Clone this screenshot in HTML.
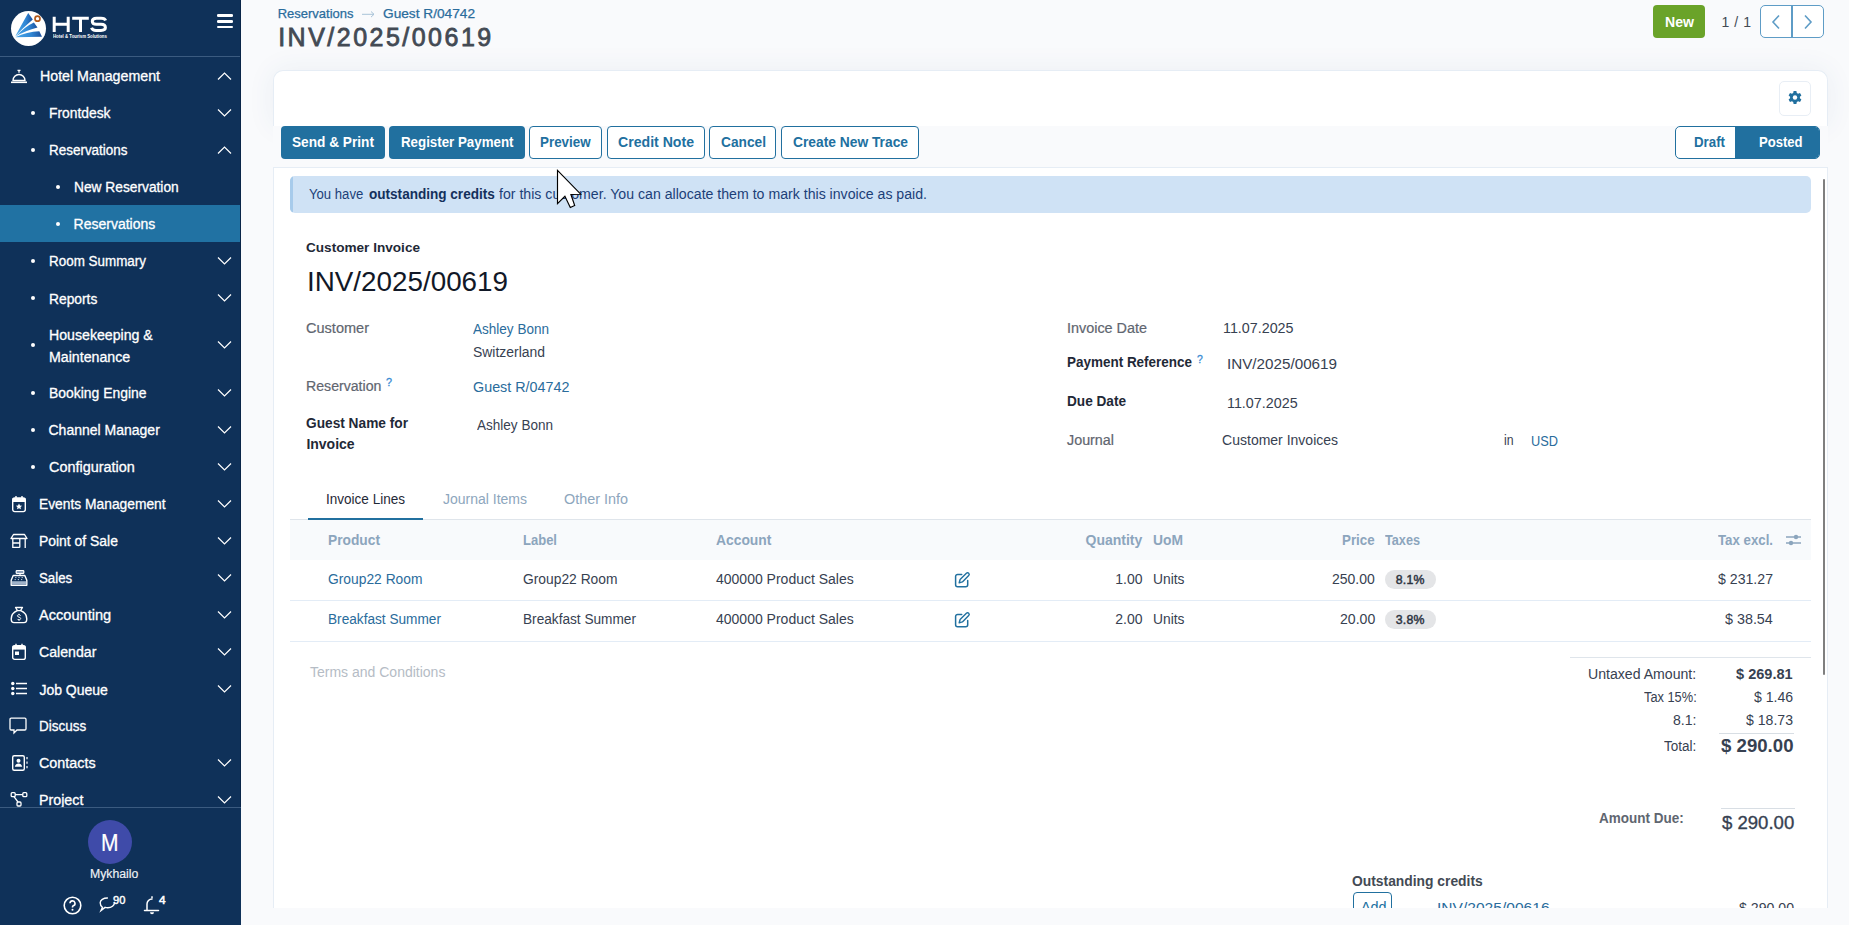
<!DOCTYPE html>
<html><head><meta charset="utf-8">
<style>
html,body{margin:0;padding:0;width:1849px;height:925px;overflow:hidden;background:#f9fafc;font-family:"Liberation Sans", sans-serif;}
.t{position:absolute;white-space:nowrap;transform-origin:0 0;}
.a{position:absolute;}
#side{position:absolute;left:0;top:0;width:241px;height:925px;background:#0f3159;overflow:hidden;}
.chev{position:absolute;left:218px;width:13px;height:8px;}
.dot{position:absolute;width:5px;height:5px;border-radius:50%;background:#fff;}
.btn{position:absolute;top:126px;height:33px;border-radius:4px;box-sizing:border-box;}
.bp{background:#21709f;}
.bo{background:#fff;border:1px solid #21709f;}
</style></head><body>
<div id="side">
  <!-- logo -->
  <div class="a" style="left:11px;top:11px;width:35px;height:35px;border-radius:50%;background:#fff;"></div>
  <svg class="a" style="left:11px;top:11px" width="35" height="35" viewBox="0 0 35 35">
    <defs><linearGradient id="lg" x1="0" x2="1" y1="0" y2="0"><stop offset="0" stop-color="#4aa8ea"/><stop offset="0.6" stop-color="#2f86d4"/><stop offset="1" stop-color="#1c4f9c"/></linearGradient></defs>
    <path d="M4.3 25.3 Q11.5 12 17.2 2 L21.8 8.4 Q12 16.5 4.3 25.3 Z" fill="url(#lg)"/>
    <path d="M4.6 25.5 Q14 15.5 22.9 11.5 L26.5 16.5 Q14.5 19.5 4.6 25.5 Z" fill="url(#lg)"/>
    <path d="M4.3 26.2 Q16 20.6 28.3 20.2 L31 25.8 Z" fill="url(#lg)"/>
    <circle cx="26.5" cy="7.7" r="2.5" fill="none" stroke="#b25a1c" stroke-width="1.7"/>
  </svg>
  <svg class="a" style="left:50px;top:14px" width="60" height="26" viewBox="50 14 60 26">
    <path d="M54.2 16.7V31.9M68.2 16.7V31.9M54.2 24.3H68.2" stroke="#fff" stroke-width="3" fill="none"/>
    <path d="M72.2 18.2H88.8M80.5 16.7V31.9" stroke="#fff" stroke-width="3" fill="none"/>
    <path d="M105.6 20.5C105 18.6 103.6 18.2 101 18.2H96.5C93.3 18.2 92.3 19.4 92.3 21.2C92.3 23 93.3 24.3 96.5 24.3H101C104.3 24.3 105.4 25.6 105.4 27.6C105.4 29.6 104.3 30.4 101 30.4H96C93.2 30.4 92.2 29.8 91.5 27.8" stroke="#fff" stroke-width="3" fill="none"/>
  </svg>
  <div class="t" style="left:52.5px;top:33.5px;font-size:4.6px;line-height:5px;font-weight:700;color:#fff;transform:scaleX(0.94)">Hotel &amp; Tourism Solutions</div>
  <!-- hamburger -->
  <div class="a" style="left:217px;top:14.1px;width:16px;height:2.6px;border-radius:1.3px;background:#fff;"></div>
  <div class="a" style="left:217px;top:20px;width:16px;height:2.6px;border-radius:1.3px;background:#fff;"></div>
  <div class="a" style="left:217px;top:25.5px;width:16px;height:2.6px;border-radius:1.3px;background:#fff;"></div>
  <div class="a" style="left:0;top:56px;width:241px;height:1px;background:#3b5b80;"></div>
  <!-- active -->
  <div class="a" style="left:0;top:205px;width:240px;height:37px;background:#2172a3;"></div>
  <div class="a" style="left:240px;top:0;width:1px;height:925px;background:#0a2548;"></div>
  <svg class="a" style="left:217px;top:71px" width="15" height="10" viewBox="0 0 15 10"><path d="M1 8.5L7.5 2 14 8.5" fill="none" stroke="#fff" stroke-width="1.2"/></svg>
<svg class="a" style="left:217px;top:145px" width="15" height="10" viewBox="0 0 15 10"><path d="M1 8.5L7.5 2 14 8.5" fill="none" stroke="#fff" stroke-width="1.2"/></svg>
<svg class="a" style="left:217px;top:108px" width="15" height="10" viewBox="0 0 15 10"><path d="M1 1.5L7.5 8 14 1.5" fill="none" stroke="#fff" stroke-width="1.2"/></svg>
<svg class="a" style="left:217px;top:256px" width="15" height="10" viewBox="0 0 15 10"><path d="M1 1.5L7.5 8 14 1.5" fill="none" stroke="#fff" stroke-width="1.2"/></svg>
<svg class="a" style="left:217px;top:293px" width="15" height="10" viewBox="0 0 15 10"><path d="M1 1.5L7.5 8 14 1.5" fill="none" stroke="#fff" stroke-width="1.2"/></svg>
<svg class="a" style="left:217px;top:340px" width="15" height="10" viewBox="0 0 15 10"><path d="M1 1.5L7.5 8 14 1.5" fill="none" stroke="#fff" stroke-width="1.2"/></svg>
<svg class="a" style="left:217px;top:388px" width="15" height="10" viewBox="0 0 15 10"><path d="M1 1.5L7.5 8 14 1.5" fill="none" stroke="#fff" stroke-width="1.2"/></svg>
<svg class="a" style="left:217px;top:425px" width="15" height="10" viewBox="0 0 15 10"><path d="M1 1.5L7.5 8 14 1.5" fill="none" stroke="#fff" stroke-width="1.2"/></svg>
<svg class="a" style="left:217px;top:462px" width="15" height="10" viewBox="0 0 15 10"><path d="M1 1.5L7.5 8 14 1.5" fill="none" stroke="#fff" stroke-width="1.2"/></svg>
<svg class="a" style="left:217px;top:499px" width="15" height="10" viewBox="0 0 15 10"><path d="M1 1.5L7.5 8 14 1.5" fill="none" stroke="#fff" stroke-width="1.2"/></svg>
<svg class="a" style="left:217px;top:536px" width="15" height="10" viewBox="0 0 15 10"><path d="M1 1.5L7.5 8 14 1.5" fill="none" stroke="#fff" stroke-width="1.2"/></svg>
<svg class="a" style="left:217px;top:573px" width="15" height="10" viewBox="0 0 15 10"><path d="M1 1.5L7.5 8 14 1.5" fill="none" stroke="#fff" stroke-width="1.2"/></svg>
<svg class="a" style="left:217px;top:610px" width="15" height="10" viewBox="0 0 15 10"><path d="M1 1.5L7.5 8 14 1.5" fill="none" stroke="#fff" stroke-width="1.2"/></svg>
<svg class="a" style="left:217px;top:647px" width="15" height="10" viewBox="0 0 15 10"><path d="M1 1.5L7.5 8 14 1.5" fill="none" stroke="#fff" stroke-width="1.2"/></svg>
<svg class="a" style="left:217px;top:684px" width="15" height="10" viewBox="0 0 15 10"><path d="M1 1.5L7.5 8 14 1.5" fill="none" stroke="#fff" stroke-width="1.2"/></svg>
<svg class="a" style="left:217px;top:758px" width="15" height="10" viewBox="0 0 15 10"><path d="M1 1.5L7.5 8 14 1.5" fill="none" stroke="#fff" stroke-width="1.2"/></svg>
<svg class="a" style="left:217px;top:795px" width="15" height="10" viewBox="0 0 15 10"><path d="M1 1.5L7.5 8 14 1.5" fill="none" stroke="#fff" stroke-width="1.2"/></svg>
<div class="dot" style="left:30.7px;top:110.9px;width:4.6px;height:4.6px"></div>
<div class="dot" style="left:30.7px;top:147.9px;width:4.6px;height:4.6px"></div>
<div class="dot" style="left:30.7px;top:258.9px;width:4.6px;height:4.6px"></div>
<div class="dot" style="left:30.7px;top:295.9px;width:4.6px;height:4.6px"></div>
<div class="dot" style="left:30.7px;top:342.9px;width:4.6px;height:4.6px"></div>
<div class="dot" style="left:30.7px;top:390.9px;width:4.6px;height:4.6px"></div>
<div class="dot" style="left:30.7px;top:427.9px;width:4.6px;height:4.6px"></div>
<div class="dot" style="left:30.7px;top:464.9px;width:4.6px;height:4.6px"></div>
<div class="dot" style="left:55.7px;top:184.9px;width:4.6px;height:4.6px"></div>
<div class="dot" style="left:55.7px;top:221.9px;width:4.6px;height:4.6px"></div>
<svg class="a" style="left:10px;top:68px" width="18" height="16" viewBox="0 0 18 16"><path d="M3 12.5 A6 6 0 0 1 15 12.5 Z" fill="none" stroke="#fff" stroke-width="1.4"/><path d="M1 14.3h16" stroke="#fff" stroke-width="1.6"/><path d="M7.5 2.3h3M9 2.3v2.5" stroke="#fff" stroke-width="1.3"/></svg>
<svg class="a" style="left:11px;top:495px" width="16" height="18" viewBox="0 0 16 18"><rect x="1.7" y="3" width="12.6" height="13.6" rx="2" fill="none" stroke="#fff" stroke-width="1.4"/><rect x="1.7" y="3" width="12.6" height="4" fill="#fff"/><path d="M5 1v3M11 1v3" stroke="#fff" stroke-width="1.4"/><path d="M8 8.6l1 2 2.1.2-1.6 1.4.5 2.1L8 13.2l-2 1.1.5-2.1-1.6-1.4 2.1-.2z" fill="#fff"/></svg>
<svg class="a" style="left:10px;top:533px" width="18" height="16" viewBox="0 0 18 16"><path d="M3.5 1.5h11l2.5 4H1z" fill="none" stroke="#fff" stroke-width="1.4" stroke-linejoin="round"/><path d="M2.8 5.5v9.5M15.2 5.5v9.5M2.8 14.3h7M2.8 10h7M9.8 5.5v9" stroke="#fff" stroke-width="1.3"/></svg>
<svg class="a" style="left:10px;top:569px" width="18" height="18" viewBox="0 0 18 18"><rect x="6.2" y="1.5" width="7.6" height="3" rx="0.8" fill="#8da2bd" stroke="#fff" stroke-width="1.2"/><path d="M10 4.5v1.8" stroke="#fff" stroke-width="1.2"/><path d="M3.2 6.5h11.6l2 4.8v4.9H1.2v-4.9z" fill="none" stroke="#fff" stroke-width="1.4" stroke-linejoin="round"/><rect x="1.8" y="12.2" width="14.4" height="3.4" fill="#9fb2c9"/><path d="M5.2 8.6h1.2M8.4 8.6h1.2M11.6 8.6h1.2M4.6 10.6h1.2M7.8 10.6h1.2M11 10.6h1.2" stroke="#c9d3df" stroke-width="1"/></svg>
<svg class="a" style="left:10px;top:606px" width="18" height="18" viewBox="0 0 18 18"><path d="M5.5 1.5h7l-2 3.2h-3z" fill="none" stroke="#fff" stroke-width="1.3" stroke-linejoin="round"/><path d="M7.2 4.7 C2 7 1 11 1.3 14 C1.5 16 2.5 16.6 4 16.6 H14 C15.5 16.6 16.5 16 16.7 14 C17 11 16 7 10.8 4.7" fill="none" stroke="#fff" stroke-width="1.4"/><path d="M10.6 9.6c-.3-.6-.9-.9-1.6-.9-.9 0-1.6.5-1.6 1.2 0 1.6 3.3.9 3.3 2.6 0 .8-.7 1.3-1.7 1.3-.8 0-1.4-.3-1.7-.9M9 7.8v.9M9 13.8v.9" fill="none" stroke="#fff" stroke-width="1"/></svg>
<svg class="a" style="left:11px;top:643px" width="16" height="18" viewBox="0 0 16 18"><rect x="1.7" y="2.8" width="12.6" height="13.6" rx="2" fill="none" stroke="#fff" stroke-width="1.4"/><rect x="1.7" y="2.8" width="12.6" height="3.8" fill="#fff"/><path d="M5 0.8v3M11 0.8v3" stroke="#fff" stroke-width="1.4"/><rect x="4" y="8.5" width="4" height="3.5" fill="#fff"/></svg>
<svg class="a" style="left:10px;top:681px" width="18" height="16" viewBox="0 0 18 16"><circle cx="2.8" cy="2.5" r="1.7" fill="#fff"/><circle cx="2.8" cy="7.5" r="1.7" fill="#fff"/><circle cx="2.8" cy="12.5" r="1.7" fill="#fff"/><path d="M6 2.5h11M6 7.5h11M6 12.5h11" stroke="#fff" stroke-width="1.6"/></svg>
<svg class="a" style="left:9px;top:717px" width="18" height="18" viewBox="0 0 18 18"><path d="M2.2 1.2h13.6a1.2 1.2 0 0 1 1.2 1.2v9.4a1.2 1.2 0 0 1-1.2 1.2H8l-3 3v-3H2.2A1.2 1.2 0 0 1 1 11.8V2.4a1.2 1.2 0 0 1 1.2-1.2z" fill="none" stroke="#fff" stroke-width="1.3"/></svg>
<svg class="a" style="left:11px;top:754px" width="18" height="18" viewBox="0 0 18 18"><rect x="1.7" y="1.7" width="11.6" height="14.6" rx="1.5" fill="none" stroke="#fff" stroke-width="1.4"/><circle cx="7.5" cy="6.8" r="2" fill="#fff"/><path d="M3.8 12.8c.6-2.3 2-3.3 3.7-3.3s3.1 1 3.7 3.3z" fill="#fff"/><path d="M16 3v2.2M16 7.5v2.2M16 12v2.2" stroke="#fff" stroke-width="1.2"/></svg>
<svg class="a" style="left:10px;top:791px" width="18" height="17" viewBox="0 0 18 17"><rect x="1.2" y="1.7" width="4" height="4" rx="1" fill="none" stroke="#fff" stroke-width="1.3"/><rect x="12.8" y="1.7" width="4" height="4" rx="1" fill="none" stroke="#fff" stroke-width="1.3"/><rect x="7" y="11" width="4" height="4" rx="1" fill="none" stroke="#fff" stroke-width="1.3"/><path d="M5.2 3.7h7.6M4 5.7l4 5.3" stroke="#fff" stroke-width="1.3"/></svg>
  <div class=t style="left:39.8px;top:68.9px;font-size:14px;line-height:14px;color:#ffffff;transform:scaleX(1.0144);-webkit-text-stroke:0.3px #fff;">Hotel Management</div>
<div class=t style="left:48.5px;top:106.1px;font-size:14px;line-height:14px;color:#ffffff;transform:scaleX(0.9880);-webkit-text-stroke:0.3px #fff;">Frontdesk</div>
<div class=t style="left:48.5px;top:143.1px;font-size:14px;line-height:14px;color:#ffffff;transform:scaleX(0.9608);-webkit-text-stroke:0.3px #fff;">Reservations</div>
<div class=t style="left:73.6px;top:180.1px;font-size:14px;line-height:14px;color:#ffffff;transform:scaleX(0.9821);-webkit-text-stroke:0.3px #fff;">New Reservation</div>
<div class=t style="left:73.6px;top:217.1px;font-size:14px;line-height:14px;color:#ffffff;-webkit-text-stroke:0.3px #fff;">Reservations</div>
<div class=t style="left:48.5px;top:254.1px;font-size:14px;line-height:14px;color:#ffffff;transform:scaleX(0.9591);-webkit-text-stroke:0.3px #fff;">Room Summary</div>
<div class=t style="left:48.5px;top:291.6px;font-size:14px;line-height:14px;color:#ffffff;transform:scaleX(0.9851);-webkit-text-stroke:0.3px #fff;">Reports</div>
<div class=t style="left:48.5px;top:328.1px;font-size:14px;line-height:14px;color:#ffffff;transform:scaleX(1.0102);-webkit-text-stroke:0.3px #fff;">Housekeeping &amp;</div>
<div class=t style="left:48.5px;top:349.6px;font-size:14px;line-height:14px;color:#ffffff;transform:scaleX(1.0128);-webkit-text-stroke:0.3px #fff;">Maintenance</div>
<div class=t style="left:48.5px;top:386.1px;font-size:14px;line-height:14px;color:#ffffff;transform:scaleX(0.9941);-webkit-text-stroke:0.3px #fff;">Booking Engine</div>
<div class=t style="left:48.5px;top:423.1px;font-size:14px;line-height:14px;color:#ffffff;-webkit-text-stroke:0.3px #fff;">Channel Manager</div>
<div class=t style="left:48.5px;top:460.1px;font-size:14px;line-height:14px;color:#ffffff;transform:scaleX(1.0314);-webkit-text-stroke:0.3px #fff;">Configuration</div>
<div class=t style="left:39.4px;top:497.4px;font-size:14px;line-height:14px;color:#ffffff;transform:scaleX(0.9859);-webkit-text-stroke:0.3px #fff;">Events Management</div>
<div class=t style="left:39.4px;top:534.3px;font-size:14px;line-height:14px;color:#ffffff;transform:scaleX(0.9938);-webkit-text-stroke:0.3px #fff;">Point of Sale</div>
<div class=t style="left:39.4px;top:571.1px;font-size:14px;line-height:14px;color:#ffffff;transform:scaleX(0.9477);-webkit-text-stroke:0.3px #fff;">Sales</div>
<div class=t style="left:39.4px;top:608.1px;font-size:14px;line-height:14px;color:#ffffff;transform:scaleX(1.0421);-webkit-text-stroke:0.3px #fff;">Accounting</div>
<div class=t style="left:39.4px;top:645.1px;font-size:14px;line-height:14px;color:#ffffff;transform:scaleX(1.0101);-webkit-text-stroke:0.3px #fff;">Calendar</div>
<div class=t style="left:39.4px;top:682.7px;font-size:14px;line-height:14px;color:#ffffff;-webkit-text-stroke:0.3px #fff;">Job Queue</div>
<div class=t style="left:38.8px;top:719.1px;font-size:14px;line-height:14px;color:#ffffff;transform:scaleX(0.9630);-webkit-text-stroke:0.3px #fff;">Discuss</div>
<div class=t style="left:39.4px;top:756.1px;font-size:14px;line-height:14px;color:#ffffff;transform:scaleX(1.0244);-webkit-text-stroke:0.3px #fff;">Contacts</div>
<div class=t style="left:39.4px;top:793.1px;font-size:14px;line-height:14px;color:#ffffff;transform:scaleX(1.0189);-webkit-text-stroke:0.3px #fff;">Project</div>
  <!-- footer -->
  <div class="a" style="left:0;top:807px;width:241px;height:118px;background:#0f3159;"></div>
  <div class="a" style="left:0;top:807px;width:241px;height:1px;background:#3b5b80;"></div>
  <div class="a" style="left:88px;top:820px;width:44px;height:44px;border-radius:50%;background:#3f4ba9;"></div>
  <svg class="a" style="left:63px;top:895.5px" width="19" height="19" viewBox="0 0 19 19"><circle cx="9.5" cy="9.5" r="8.3" fill="none" stroke="#fff" stroke-width="1.6"/><path d="M7 7.3a2.5 2.5 0 1 1 3.3 2.4c-.6.3-.8.7-.8 1.3v.6" fill="none" stroke="#fff" stroke-width="1.6"/><circle cx="9.5" cy="13.8" r="1" fill="#fff"/></svg>
<svg class="a" style="left:99px;top:897px" width="17" height="16" viewBox="0 0 17 16"><path d="M15.5 5.5c0 3-3 5.3-6.7 5.3-1 0-1.9-.1-2.7-.4L2 13.5l1.4-3.3C2 9.2 1.2 7.5 1.2 5.8 1.2 3 4.4 1 8.4 1" fill="none" stroke="#fff" stroke-width="1.4" stroke-linecap="round"/></svg>
<svg class="a" style="left:143px;top:895px" width="18" height="20" viewBox="0 0 18 20"><path d="M4 14.5V9a5 5 0 0 1 5-5M1.5 15.5h14" fill="none" stroke="#fff" stroke-width="1.5" stroke-linecap="round"/><path d="M9 1.2v2" stroke="#fff" stroke-width="1.5"/><path d="M7 17.2a2 2 0 0 0 4 0" fill="#fff"/></svg>
  <div class=t style="left:101.2px;top:831.5px;font-size:23px;line-height:23px;color:#fff;transform:scaleX(0.9128);-webkit-text-stroke:0.2px #fff;">M</div>
<div class=t style="left:89.6px;top:867.8px;font-size:12px;line-height:12px;color:#eef2f6;transform:scaleX(1.0220);-webkit-text-stroke:0.15px #eef2f6;">Mykhailo</div>
<div class=t style="left:113.1px;top:895.3px;font-size:10.5px;line-height:10.5px;color:#fff;transform:scaleX(1.0610);-webkit-text-stroke:0.4px #fff;">90</div>
<div class=t style="left:159.4px;top:895.3px;font-size:10.5px;line-height:10.5px;color:#fff;transform:scaleX(1.1294);-webkit-text-stroke:0.5px #fff;">4</div>
</div>
<!-- main -->
<!-- control panel card -->
<div class="a" style="left:273px;top:70px;width:1555px;height:56px;background:#fff;border-radius:10px 10px 0 0;box-shadow:0 0 28px rgba(40,80,130,0.07);border:1px solid #e6edf5;border-bottom:none;box-sizing:border-box"></div>
<div class="a" style="left:273px;top:126px;width:1555px;height:41px;background:#f9fafc;"></div>
<!-- sheet -->
<div class="a" style="left:273px;top:167px;width:1555px;height:741px;background:#fff;border:1px solid #e6edf5;border-bottom:none;box-sizing:border-box"></div>
<!-- gear button -->
<div class="a" style="left:1779px;top:81px;width:32px;height:34.5px;border:1px solid #e8eef5;border-radius:5px;box-sizing:border-box;background:#fff"></div>
<svg class="a" style="left:1787px;top:90px" width="16" height="16" viewBox="0 0 16 16">
  <path fill="#21709f" d="M6.6 1h2.8l.4 2 1.3.7 1.9-.7 1.4 2.4-1.5 1.3v1.6l1.5 1.3-1.4 2.4-1.9-.7-1.3.7-.4 2H6.6l-.4-2-1.3-.7-1.9.7L1.6 9.6l1.5-1.3V6.7L1.6 5.4 3 3l1.9.7L6.2 3z"/>
  <circle cx="8" cy="7.5" r="2.2" fill="#fff"/>
</svg>
<!-- New btn -->
<div class="a" style="left:1653px;top:5px;width:52px;height:33px;border-radius:4px;background:#6aa329"></div>
<!-- pager -->
<div class="a" style="left:1760px;top:5px;width:64px;height:33px;border:1px solid #5e9cc6;border-radius:5px;box-sizing:border-box;background:#fff"></div>
<div class="a" style="left:1791px;top:5px;width:2px;height:33px;background:#5e9cc6"></div>
<svg class="a" style="left:1770px;top:14px" width="12" height="16" viewBox="0 0 12 16"><path d="M9 1.5L3 8l6 6.5" fill="none" stroke="#5e9cc6" stroke-width="1.6"/></svg>
<svg class="a" style="left:1802px;top:14px" width="12" height="16" viewBox="0 0 12 16"><path d="M3 1.5L9 8l-6 6.5" fill="none" stroke="#5e9cc6" stroke-width="1.6"/></svg>
<!-- breadcrumb arrow -->
<svg class="a" style="left:361px;top:10px" width="15" height="8" viewBox="0 0 15 8"><path d="M1 4.3h12M10 1.5l3 2.8-3 2.8" fill="none" stroke="#a8c3d8" stroke-width="1"/></svg>
<!-- action buttons -->
<div class="btn bp" style="left:281px;width:104px"></div>
<div class="btn bp" style="left:389.3px;width:135.3px"></div>
<div class="btn bo" style="left:529.3px;width:72.3px"></div>
<div class="btn bo" style="left:606.5px;width:98px"></div>
<div class="btn bo" style="left:709.4px;width:67.1px"></div>
<div class="btn bo" style="left:781.2px;width:137.5px"></div>
<!-- draft/posted -->
<div class="a" style="left:1675px;top:126px;width:145px;height:33px;border:1px solid #21709f;border-radius:5px;box-sizing:border-box;background:#fff;overflow:hidden">
  <div class="a" style="left:59px;top:0;width:86px;height:33px;background:#21709f"></div>
</div>
<!-- alert -->
<div class="a" style="left:290px;top:176px;width:1521px;height:37px;background:#cfe2f5;border-radius:5px;overflow:hidden">
  <div class="a" style="left:0;top:0;width:3px;height:37px;background:#a7cbeb"></div>
</div>
<!-- scrollbar -->
<div class="a" style="left:1822.5px;top:179px;width:2.5px;height:496px;background:#7f7f7f;border-radius:1px"></div>
<!-- tabs -->
<div class="a" style="left:290px;top:519px;width:1521px;height:1px;background:#dfe5eb"></div>
<div class="a" style="left:308px;top:517.5px;width:115px;height:2px;background:#21709f"></div>
<!-- table -->
<div class="a" style="left:290px;top:520px;width:1521px;height:40px;background:#f8fafc"></div>
<div class="a" style="left:290px;top:600px;width:1521px;height:1px;background:#e3ecf6"></div>
<div class="a" style="left:290px;top:641px;width:1521px;height:1px;background:#e3ecf6"></div>
<svg class="a" style="left:954px;top:572px" width="17" height="17" viewBox="0 0 17 17"><path d="M7.7 2.4H3.6a2 2 0 0 0-2 2v8.3a2 2 0 0 0 2 2h8.1a2 2 0 0 0 2-2V8.6" fill="none" stroke="#21709f" stroke-width="1.5" stroke-linecap="round"/><path d="M5.2 10.8l.9-3.3 6.3-6.2a1.6 1.6 0 0 1 2.3 2.3L8.4 9.9z" fill="none" stroke="#21709f" stroke-width="1.4" stroke-linejoin="round"/></svg>
<svg class="a" style="left:954px;top:612.4px" width="17" height="17" viewBox="0 0 17 17"><path d="M7.7 2.4H3.6a2 2 0 0 0-2 2v8.3a2 2 0 0 0 2 2h8.1a2 2 0 0 0 2-2V8.6" fill="none" stroke="#21709f" stroke-width="1.5" stroke-linecap="round"/><path d="M5.2 10.8l.9-3.3 6.3-6.2a1.6 1.6 0 0 1 2.3 2.3L8.4 9.9z" fill="none" stroke="#21709f" stroke-width="1.4" stroke-linejoin="round"/></svg>
<!-- badges -->
<div class="a" style="left:1385.2px;top:570px;width:50.5px;height:18.6px;border-radius:9.3px;background:#e4e5e7"></div>
<div class="a" style="left:1385.2px;top:610px;width:50.5px;height:18.6px;border-radius:9.3px;background:#e4e5e7"></div>
<!-- sliders icon -->
<svg class="a" style="left:1785px;top:533px" width="17" height="14" viewBox="0 0 17 14">
  <path d="M1 4h15M1 10h15" stroke="#8ca5bd" stroke-width="1.5"/>
  <circle cx="11" cy="4" r="2.2" fill="#8ca5bd"/><circle cx="6" cy="10" r="2.2" fill="#8ca5bd"/>
</svg>
<!-- totals lines -->
<div class="a" style="left:1570px;top:657px;width:1241px;height:1px;background:#dfe5eb;width:241px"></div>
<div class="a" style="left:1719px;top:733px;width:75px;height:1px;background:#d8dee4"></div>
<div class="a" style="left:1721px;top:808px;width:74px;height:1px;background:#d8dee4"></div>
<!-- add btn -->
<div class="a" style="left:1353px;top:891.5px;width:39px;height:30px;border:1px solid #21709f;border-radius:4px;box-sizing:border-box"></div>
<div class=t style="left:277.7px;top:7.0px;font-size:13px;line-height:13px;color:#2a6c9c;-webkit-text-stroke:0.25px #2a6c9c;">Reservations</div>
<div class=t style="left:383.0px;top:7.0px;font-size:13px;line-height:13px;color:#2a6c9c;transform:scaleX(1.0520);-webkit-text-stroke:0.25px #2a6c9c;">Guest R/04742</div>
<div class=t style="left:278.2px;top:24.8px;font-size:25px;line-height:25px;color:#434a54;letter-spacing:2.484px;-webkit-text-stroke:0.8px #434a54;">INV/2025/00619</div>
<div class=t style="left:1721.5px;top:15.1px;font-size:14px;line-height:14px;color:#434a54;letter-spacing:0.562px;">1 / 1</div>
<div class=t style="left:1664.7px;top:15.1px;font-size:14px;line-height:14px;font-weight:700;color:#ffffff;transform:scaleX(1.0071);">New</div>
<div class=t style="left:292.2px;top:135.3px;font-size:14px;line-height:14px;font-weight:700;color:#fff;transform:scaleX(0.9760);">Send &amp; Print</div>
<div class=t style="left:401.2px;top:135.3px;font-size:14px;line-height:14px;font-weight:700;color:#fff;transform:scaleX(0.9511);">Register Payment</div>
<div class=t style="left:540.4px;top:135.3px;font-size:14px;line-height:14px;font-weight:700;color:#21709f;transform:scaleX(0.9558);">Preview</div>
<div class=t style="left:618.0px;top:135.3px;font-size:14px;line-height:14px;font-weight:700;color:#21709f;transform:scaleX(1.0072);">Credit Note</div>
<div class=t style="left:720.7px;top:135.3px;font-size:14px;line-height:14px;font-weight:700;color:#21709f;transform:scaleX(0.9799);">Cancel</div>
<div class=t style="left:792.7px;top:135.3px;font-size:14px;line-height:14px;font-weight:700;color:#21709f;transform:scaleX(0.9851);">Create New Trace</div>
<div class=t style="left:1693.6px;top:135.1px;font-size:14px;line-height:14px;font-weight:700;color:#21709f;transform:scaleX(0.9488);">Draft</div>
<div class=t style="left:1758.8px;top:135.1px;font-size:14px;line-height:14px;font-weight:700;color:#fff;transform:scaleX(0.9339);">Posted</div>
<div class=t style="left:309.3px;top:187.1px;font-size:14px;line-height:14px;color:#1c3f78;transform:scaleX(0.9382);">You have</div>
<div class=t style="left:368.6px;top:187.1px;font-size:14px;line-height:14px;font-weight:700;color:#14305c;transform:scaleX(0.9684);">outstanding credits</div>
<div class=t style="left:499.2px;top:187.1px;font-size:14px;line-height:14px;color:#1c3f78;transform:scaleX(1.0092);">for this customer. You can allocate them to mark this invoice as paid.</div>
<div class=t style="left:386.2px;top:377.1px;font-size:10.5px;line-height:10.5px;color:#3a8cd4;transform:scaleX(1.0267);-webkit-text-stroke:0.3px #3a8cd4;">?</div>
<div class=t style="left:1196.5px;top:353.6px;font-size:10.5px;line-height:10.5px;color:#3a8cd4;transform:scaleX(0.9925);-webkit-text-stroke:0.3px #3a8cd4;">?</div>
<div class=t style="left:306.4px;top:240.5px;font-size:13.5px;line-height:13.5px;font-weight:700;color:#1f2937;transform:scaleX(1.0063);">Customer Invoice</div>
<div class=t style="left:307.2px;top:267.6px;font-size:28px;line-height:28px;color:#111827;transform:scaleX(0.9931);">INV/2025/00619</div>
<div class=t style="left:306.4px;top:321.3px;font-size:14px;line-height:14px;color:#5f6670;transform:scaleX(1.0381);-webkit-text-stroke:0.2px #5f6670;">Customer</div>
<div class=t style="left:306.4px;top:378.7px;font-size:14px;line-height:14px;color:#5f6670;transform:scaleX(1.0093);-webkit-text-stroke:0.2px #5f6670;">Reservation</div>
<div class=t style="left:306.4px;top:415.7px;font-size:14px;line-height:14px;font-weight:700;color:#1f2937;transform:scaleX(0.9784);">Guest Name for</div>
<div class=t style="left:306.4px;top:437.1px;font-size:14px;line-height:14px;font-weight:700;color:#1f2937;">Invoice</div>
<div class=t style="left:472.7px;top:322.4px;font-size:14px;line-height:14px;color:#2a6c9c;transform:scaleX(0.9668);">Ashley Bonn</div>
<div class=t style="left:472.7px;top:345.1px;font-size:14px;line-height:14px;color:#374151;transform:scaleX(0.9948);">Switzerland</div>
<div class=t style="left:472.7px;top:380.1px;font-size:14px;line-height:14px;color:#2a6c9c;transform:scaleX(1.0247);">Guest R/04742</div>
<div class=t style="left:476.7px;top:418.1px;font-size:14px;line-height:14px;color:#374151;transform:scaleX(0.9668);">Ashley Bonn</div>
<div class=t style="left:1067.2px;top:321.3px;font-size:14px;line-height:14px;color:#5f6670;transform:scaleX(1.0279);-webkit-text-stroke:0.2px #5f6670;">Invoice Date</div>
<div class=t style="left:1067.2px;top:354.9px;font-size:14px;line-height:14px;font-weight:700;color:#1f2937;transform:scaleX(0.9619);">Payment Reference</div>
<div class=t style="left:1067.2px;top:394.1px;font-size:14px;line-height:14px;font-weight:700;color:#1f2937;transform:scaleX(0.9722);">Due Date</div>
<div class=t style="left:1067.2px;top:432.8px;font-size:14px;line-height:14px;color:#5f6670;transform:scaleX(1.0235);-webkit-text-stroke:0.2px #5f6670;">Journal</div>
<div class=t style="left:1223.0px;top:321.3px;font-size:14px;line-height:14px;color:#374151;transform:scaleX(1.0213);">11.07.2025</div>
<div class=t style="left:1226.7px;top:356.8px;font-size:14px;line-height:14px;color:#374151;transform:scaleX(1.0869);">INV/2025/00619</div>
<div class=t style="left:1227.0px;top:395.8px;font-size:14px;line-height:14px;color:#374151;transform:scaleX(1.0227);">11.07.2025</div>
<div class=t style="left:1222.1px;top:432.8px;font-size:14px;line-height:14px;color:#374151;">Customer Invoices</div>
<div class=t style="left:1503.5px;top:433.0px;font-size:14px;line-height:14px;color:#374151;transform:scaleX(0.8802);">in</div>
<div class=t style="left:1530.8px;top:434.1px;font-size:14px;line-height:14px;color:#2a6c9c;transform:scaleX(0.9133);">USD</div>
<div class=t style="left:325.7px;top:492.3px;font-size:14px;line-height:14px;color:#1f2937;transform:scaleX(0.9667);">Invoice Lines</div>
<div class=t style="left:443.0px;top:492.3px;font-size:14px;line-height:14px;color:#8da6bd;">Journal Items</div>
<div class=t style="left:564.0px;top:492.3px;font-size:14px;line-height:14px;color:#8da6bd;transform:scaleX(1.0279);">Other Info</div>
<div class=t style="left:328.3px;top:533.1px;font-size:14px;line-height:14px;font-weight:700;color:#8ca5bd;transform:scaleX(0.9832);">Product</div>
<div class=t style="left:522.5px;top:533.1px;font-size:14px;line-height:14px;font-weight:700;color:#8ca5bd;transform:scaleX(0.9295);">Label</div>
<div class=t style="left:716.0px;top:533.1px;font-size:14px;line-height:14px;font-weight:700;color:#8ca5bd;transform:scaleX(0.9893);">Account</div>
<div class=t style="left:1085.5px;top:533.1px;font-size:14px;line-height:14px;font-weight:700;color:#8ca5bd;">Quantity</div>
<div class=t style="left:1153.3px;top:533.1px;font-size:14px;line-height:14px;font-weight:700;color:#8ca5bd;transform:scaleX(0.9892);">UoM</div>
<div class=t style="left:1342.2px;top:533.1px;font-size:14px;line-height:14px;font-weight:700;color:#8ca5bd;transform:scaleX(0.9518);">Price</div>
<div class=t style="left:1385.2px;top:533.1px;font-size:14px;line-height:14px;font-weight:700;color:#8ca5bd;transform:scaleX(0.9051);">Taxes</div>
<div class=t style="left:1718.0px;top:533.1px;font-size:14px;line-height:14px;font-weight:700;color:#8ca5bd;transform:scaleX(0.9462);">Tax excl.</div>
<div class=t style="left:328.3px;top:572.3px;font-size:14px;line-height:14px;color:#2a6c9c;transform:scaleX(0.9873);">Group22 Room</div>
<div class=t style="left:522.5px;top:572.3px;font-size:14px;line-height:14px;color:#374151;transform:scaleX(0.9873);">Group22 Room</div>
<div class=t style="left:716.0px;top:572.3px;font-size:14px;line-height:14px;color:#374151;">400000 Product Sales</div>
<div class=t style="left:1115.3px;top:572.3px;font-size:14px;line-height:14px;color:#374151;">1.00</div>
<div class=t style="left:1153.3px;top:572.3px;font-size:14px;line-height:14px;color:#374151;transform:scaleX(0.9873);">Units</div>
<div class=t style="left:1332.0px;top:572.3px;font-size:14px;line-height:14px;color:#374151;">250.00</div>
<div class=t style="left:1718.0px;top:572.3px;font-size:14px;line-height:14px;color:#374151;transform:scaleX(1.0092);">$ 231.27</div>
<div class=t style="left:1395.8px;top:574.3px;font-size:12.3px;line-height:12.3px;color:#2b3240;letter-spacing:0.190px;-webkit-text-stroke:0.45px #2b3240;">8.1%</div>
<div class=t style="left:328.3px;top:612.3px;font-size:14px;line-height:14px;color:#2a6c9c;transform:scaleX(0.9747);">Breakfast Summer</div>
<div class=t style="left:522.5px;top:612.3px;font-size:14px;line-height:14px;color:#374151;transform:scaleX(0.9747);">Breakfast Summer</div>
<div class=t style="left:716.0px;top:612.3px;font-size:14px;line-height:14px;color:#374151;">400000 Product Sales</div>
<div class=t style="left:1115.3px;top:612.3px;font-size:14px;line-height:14px;color:#374151;">2.00</div>
<div class=t style="left:1153.3px;top:612.3px;font-size:14px;line-height:14px;color:#374151;transform:scaleX(0.9873);">Units</div>
<div class=t style="left:1339.5px;top:612.3px;font-size:14px;line-height:14px;color:#374151;transform:scaleX(1.0072);">20.00</div>
<div class=t style="left:1725.2px;top:612.3px;font-size:14px;line-height:14px;color:#374151;transform:scaleX(1.0231);">$ 38.54</div>
<div class=t style="left:1395.8px;top:614.3px;font-size:12.3px;line-height:12.3px;color:#2b3240;letter-spacing:0.190px;-webkit-text-stroke:0.45px #2b3240;">3.8%</div>
<div class=t style="left:310.0px;top:665.1px;font-size:14px;line-height:14px;color:#b5bcc5;">Terms and Conditions</div>
<div class=t style="left:1588.1px;top:666.9px;font-size:14px;line-height:14px;color:#374151;transform:scaleX(1.0074);">Untaxed Amount:</div>
<div class=t style="left:1736.3px;top:666.9px;font-size:14px;line-height:14px;font-weight:700;color:#374151;transform:scaleX(1.0385);">$ 269.81</div>
<div class=t style="left:1643.6px;top:689.8px;font-size:14px;line-height:14px;color:#374151;transform:scaleX(0.9150);">Tax 15%:</div>
<div class=t style="left:1753.8px;top:689.8px;font-size:14px;line-height:14px;color:#374151;transform:scaleX(1.0067);">$ 1.46</div>
<div class=t style="left:1672.8px;top:712.8px;font-size:14px;line-height:14px;color:#374151;transform:scaleX(1.0060);">8.1:</div>
<div class=t style="left:1746.0px;top:712.8px;font-size:14px;line-height:14px;color:#374151;transform:scaleX(1.0060);">$ 18.73</div>
<div class=t style="left:1664.0px;top:739.4px;font-size:14px;line-height:14px;color:#374151;transform:scaleX(0.9651);">Total:</div>
<div class=t style="left:1720.7px;top:736.6px;font-size:18px;line-height:18px;font-weight:700;color:#374151;transform:scaleX(1.0346);">$ 290.00</div>
<div class=t style="left:1599.3px;top:811.3px;font-size:14px;line-height:14px;font-weight:700;color:#5f6670;transform:scaleX(0.9637);">Amount Due:</div>
<div class=t style="left:1722.0px;top:813.4px;font-size:19px;line-height:19px;color:#374151;transform:scaleX(0.9761);-webkit-text-stroke:0.35px #374151;">$ 290.00</div>
<div class=t style="left:1352.4px;top:873.5px;font-size:14px;line-height:14px;font-weight:700;color:#434a54;transform:scaleX(0.9884);">Outstanding credits</div>
<div class=t style="left:1360.8px;top:900.4px;font-size:14px;line-height:14px;color:#21709f;transform:scaleX(1.0272);">Add</div>
<div class=t style="left:1437.0px;top:900.9px;font-size:14px;line-height:14px;color:#2a6c9c;transform:scaleX(1.1126);">INV/2025/00616</div>
<div class=t style="left:1738.6px;top:900.9px;font-size:14px;line-height:14px;color:#374151;transform:scaleX(1.0092);">$ 290.00</div>
<!-- bottom clip -->
<div class="a" style="left:241px;top:908px;width:1608px;height:17px;background:#f9fafc"></div>
<!-- cursor -->
<svg class="a" style="left:556px;top:169px" width="28" height="42" viewBox="0 0 28 42">
  <path d="M1.5 1.4 L1.5 34.7 L8.9 27.3 L14.3 38.6 L18.7 36.5 L14.9 25.5 L24.7 25.2 Z" fill="#fff" stroke="#000" stroke-width="1.15" stroke-linejoin="miter"/>
</svg>
</body></html>
